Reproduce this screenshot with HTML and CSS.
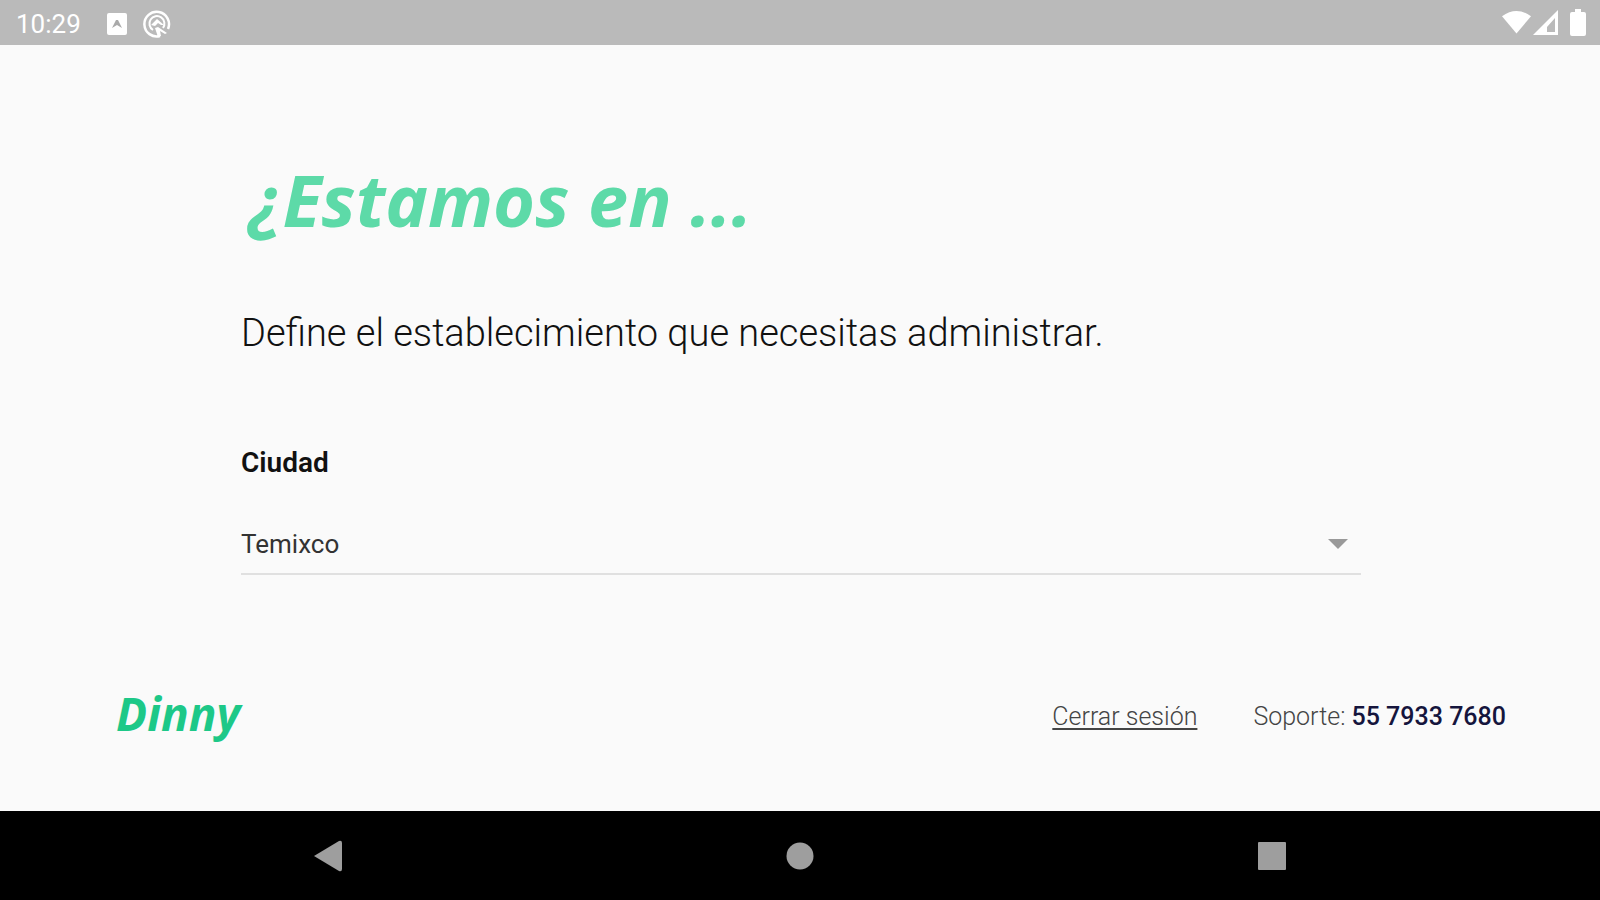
FILE: index.html
```html
<!DOCTYPE html>
<html lang="es">
<head>
<meta charset="utf-8">
<meta name="viewport" content="width=device-width, initial-scale=1">
<title>Dinny</title>
<link rel="stylesheet" href="styles.css">
</head>
<body>
<header class="status">
  <div class="status-group status-left">
    <time class="clock">10:29</time>
    <svg class="app-icon" width="20" height="22" viewBox="0 0 20 22" aria-hidden="true"><rect x="0" y="0" width="20" height="22" rx="2" fill="#fff"/><path d="M5 15 9 7h2l4 8-5-3z" fill="#aaa"/></svg>
    <svg width="28" height="28" viewBox="0 0 28 28" fill="none" stroke="#fff" stroke-width="2.5" aria-hidden="true"><path d="M17 26A12.300 12.300 0 1 1 25 19"/><path d="M10 20A7.500 7.500 0 1 1 20 18" stroke-width="2"/><path d="M8 15l6-6 7 6-3 0-3-2-3 3zM12 18l3-1 9 6-2 1-5-3 1 5-3 1z" fill="#fff" stroke="none"/></svg>
  </div>
  <div class="status-group status-right">
    <svg width="29" height="25" viewBox="0 0 30 25" aria-hidden="true"><path d="M0 6Q15-5 30 6L15 24z" fill="#fff"/></svg>
    <svg width="25" height="25" viewBox="0 0 25 25" aria-hidden="true"><path d="M25 0v25H0zM22 8l-8 9v5h8z" fill="#fff" fill-rule="evenodd"/></svg>
    <svg class="battery" width="16" height="27" viewBox="0 0 16 27" aria-hidden="true"><path d="M5 0h6v3h3q2 0 2 2v20q0 2-2 2H2q-2 0-2-2V5q0-2 2-2h3z" fill="#fff"/></svg>
  </div>
</header>
<main class="page">
  <form class="form">
    <h1 class="title">¿Estamos en ...</h1>
    <p class="lead">Define el establecimiento que necesitas administrar.</p>
    <label class="label" for="city">Ciudad</label>
    <div class="field">
      <select class="select" id="city"><option>Temixco</option></select>
      <svg class="caret" width="20" height="10" viewBox="0 0 20 10" aria-hidden="true"><path d="M0 0h20L10 10z" fill="#999"/></svg>
    </div>
  </form>
  <footer class="footer">
    <div class="logo">Dinny</div>
    <div class="links">
      <a class="logout" href="#">Cerrar sesión</a>
      <span class="support">Soporte: <strong class="phone">55 7933 7680</strong></span>
    </div>
  </footer>
</main>
<nav class="nav">
  <button class="nav-button" type="button" aria-label="Atrás"><svg width="28" height="32" viewBox="0 0 28 32"><path d="M0 16 25 1q3-1 3 2v26q0 3-3 2z" fill="#9e9e9e"/></svg></button>
  <button class="nav-button" type="button" aria-label="Inicio"><svg width="28" height="28" viewBox="0 0 28 28"><circle cx="14" cy="14" r="13.5" fill="#9e9e9e"/></svg></button>
  <button class="nav-button" type="button" aria-label="Recientes"><svg width="28" height="28" viewBox="0 0 28 28"><rect width="28" height="28" rx="1" fill="#9e9e9e"/></svg></button>
</nav>
</body>
</html>
```
FILE: styles.css
```css
* { box-sizing: border-box; }
body {
  margin: 0;
  min-height: 100vh;
  display: flex;
  flex-direction: column;
  background: #fafafa;
  color: #111;
  font-family: Roboto, "Liberation Sans", sans-serif;
}
.status {
  display: flex;
  justify-content: space-between;
  align-items: center;
  height: 45px;
  padding: 0 14px 0 16px;
  background: #bababa;
  color: #fff;
}
.status-group { display: flex; align-items: center; }
.status-left { gap: 16px; padding-top: 2px; }
.status-right { gap: 2px; }
.clock { font-size: 26px; }
.app-icon { margin-left: 10px; }
.battery { margin-left: 10px; }
.page {
  flex: 1;
  display: flex;
  flex-direction: column;
  justify-content: space-between;
  padding: 110px 94px 70px 116px;
}
.form { padding: 0 145px 0 125px; }
.title {
  margin: 0;
  padding-left: 8px;
  font: italic 700 72px/88px "Noto Sans", "Open Sans", sans-serif;
  color: #5ddaa8;
}
.lead { margin: 66px 0 0; font-size: 38px; line-height: 48px; font-weight: 300; }
.label {
  display: block;
  margin-top: 90px;
  font-size: 28px;
  line-height: 32px;
  font-weight: 600;
}
.field {
  display: flex;
  align-items: center;
  margin-top: 36px;
  padding-right: 13px;
  border-bottom: 2px solid #e0e0e0;
}
.select {
  flex: 1;
  height: 58px;
  padding: 0;
  border: 0;
  background: none;
  appearance: none;
  font: inherit;
  font-size: 26px;
  color: #333;
}
.caret { pointer-events: none; }
.footer { display: flex; justify-content: space-between; align-items: center; }
.logo { font: italic 700 46px/56px "Noto Sans", "Open Sans", sans-serif; color: #1dc888; }
.links { display: flex; gap: 56px; padding-top: 8px; font-size: 25px; line-height: 32px; font-weight: 300; color: #444; }
.logout { color: inherit; text-underline-offset: 3px; }
.phone { color: #15153d; font-weight: 500; }
.nav {
  display: grid;
  grid-template-columns: repeat(3, 1fr);
  height: 89px;
  padding: 0 92px;
  background: #000;
}
.nav-button {
  display: flex;
  align-items: center;
  justify-content: center;
  padding: 0;
  border: 0;
  background: none;
}
```
